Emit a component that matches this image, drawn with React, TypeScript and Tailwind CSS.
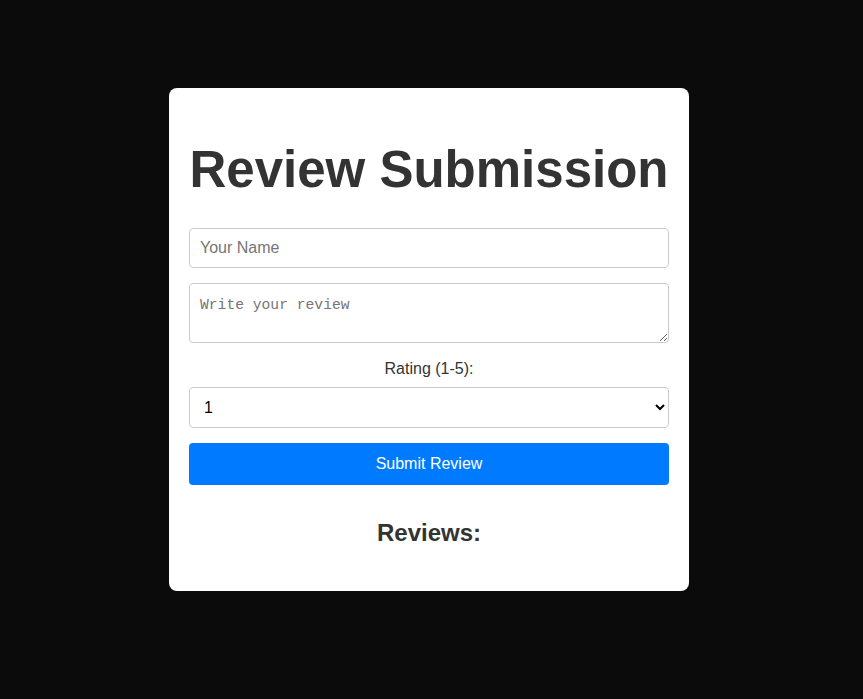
import { useState } from 'react';

const App = () => {
  const [name, setName] = useState('');
  const [text, setText] = useState('');
  const [rating, setRating] = useState('1');
  const [reviews, setReviews] = useState<{ name: string; text: string; rating: string }[]>([]);

  const submit = (e: React.FormEvent) => {
    e.preventDefault();
    if (!name || !text) return;
    setReviews([...reviews, { name, text, rating }]);
    setName('');
    setText('');
    setRating('1');
  };

  return (
    <div className="min-h-screen bg-[#0b0b0b] flex justify-center items-start pt-[88px] pr-[5px] font-['Liberation_Sans',Arial,sans-serif]">
      <div className="w-[520px] bg-white rounded-[8px] p-[20px] pb-[44px]">
        <h1 className="text-[51px] leading-[60px] font-bold text-[#333] text-center mt-[32px] mb-[28px] whitespace-nowrap">
          Review Submission
        </h1>

        <form onSubmit={submit} className="flex flex-col">
          <input
            type="text"
            value={name}
            onChange={(e) => setName(e.target.value)}
            placeholder="Your Name"
            className="w-full h-[40px] px-[10px] border border-[#ccc] rounded-[4px] text-[16px] text-black placeholder:text-[#757575] outline-none mb-[15px]"
          />
          <textarea
            value={text}
            onChange={(e) => setText(e.target.value)}
            placeholder="Write your review"
            className="w-full h-[60px] px-[10px] pt-[13px] pb-[10px] border border-[#ccc] rounded-[4px] text-[14.67px] leading-[17px] font-['Liberation_Mono',monospace] text-black placeholder:text-[#757575] outline-none"
          />
          <label className="block text-center text-[16px] leading-[18px] text-[#333] mt-[17px] mb-[9px]">
            Rating (1-5):
          </label>
          <select
            value={rating}
            onChange={(e) => setRating(e.target.value)}
            className="w-full h-[41px] px-[10px] border border-[#ccc] rounded-[4px] text-[16px] text-black bg-white outline-none mb-[15px]"
          >
            {['1', '2', '3', '4', '5'].map((r) => (
              <option key={r} value={r}>
                {r}
              </option>
            ))}
          </select>
          <button
            type="submit"
            className="w-full h-[42px] bg-[#007bff] text-white text-[16px] rounded-[4px]"
          >
            Submit Review
          </button>
        </form>

        <h2 className="text-[24px] leading-[28px] font-bold text-[#333] text-center mt-[34px]">Reviews:</h2>
        {reviews.length > 0 && (
          <ul className="mt-[10px] space-y-2">
            {reviews.map((r, i) => (
              <li key={i} className="border-b border-[#eee] py-2 text-[#333]">
                <strong>{r.name}</strong> ({r.rating}/5): {r.text}
              </li>
            ))}
          </ul>
        )}
      </div>
    </div>
  );
};

export default App;
